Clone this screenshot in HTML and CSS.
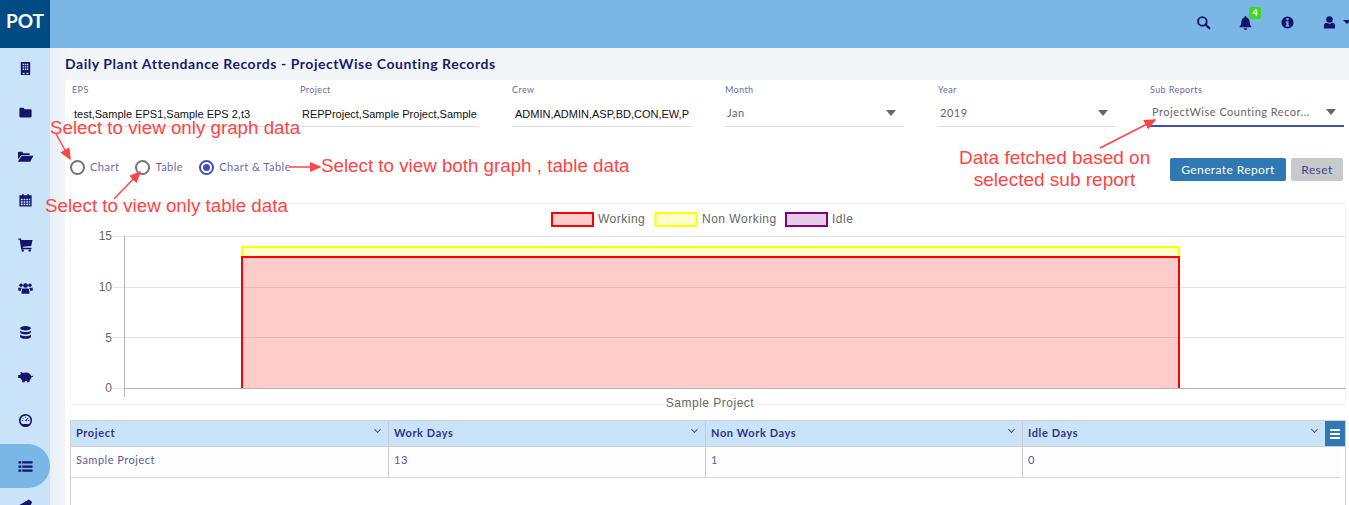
FILE: index.html
```html
<!DOCTYPE html>
<html lang="en">
<head>
  <meta charset="UTF-8" />
  <title>Daily Plant Attendance Records</title>
  <link rel="stylesheet" href="styles.css">
</head>
<body>
  <header class="topbar">
    <div class="logo">POT</div>
    <div class="top-icons">
      <svg class="top-icon" viewBox="0 0 16 16"><circle cx="6.8" cy="6.8" r="4.6" fill="none" stroke="currentColor" stroke-width="2"/><path d="M10.2 10.2l4 4" stroke="currentColor" stroke-width="2.4" stroke-linecap="round"/></svg>
      <span class="bell">
        <svg class="top-icon" viewBox="0 0 16 16"><path d="M8 1a1 1 0 0 1 1 1v.6c2.2.5 3.4 2.3 3.4 4.4 0 3 .8 4 1.8 5v1H1.800v-1c1-1 1.800-2 1.800-5 0-2.100 1.200-3.900 3.400-4.400V2a1 1 0 0 1 1-1zM6.200 14.200h3.600a1.800 1.800 0 0 1-3.600 0z" fill="currentColor"/></svg>
        <span class="badge">4</span>
      </span>
      <svg class="top-icon" viewBox="0 0 16 16"><path fill-rule="evenodd" d="M8 1.500a6.500 6.500 0 1 1 0 13 6.500 6.500 0 0 1 0-13zM6.800 3.500v2.200h2.400V3.500zM6 7v1.500h.9v2.300H6v1.500h4v-1.500h-.9V7z" fill="currentColor"/></svg>
      <span class="user">
        <svg class="top-icon" viewBox="0 0 16 16"><circle cx="8" cy="4.800" r="3.500" fill="currentColor"/><path d="M2 14.500v-3c0-2 1.500-3.300 3.200-3.300.8.600 1.800 1 2.800 1s2-.4 2.800-1c1.700 0 3.200 1.300 3.200 3.300v3z" fill="currentColor"/></svg>
        <span class="caret"></span>
      </span>
    </div>
  </header>

  <div class="layout">
    <aside class="sidebar">
      <svg class="side-icon" viewBox="0 0 16 16"><path fill-rule="evenodd" d="M3 1h10v14H3zM5 3v1.500h1.500V3zM7.300 3v1.500h1.500V3zM9.500 3v1.500H11V3zM5 5.500V7h1.500V5.500zM7.300 5.500V7h1.500V5.500zM9.500 5.500V7H11V5.500zM5 8v1.500h1.500V8zM7.300 8v1.500h1.500V8zM9.500 8v1.500H11V8zM5 12.500V14h2v-1.500zM9 12.500V14h2v-1.500z" fill="currentColor"/></svg>
      <svg class="side-icon" viewBox="0 0 16 16"><path d="M1.500 4.200c0-.6.500-1.200 1.200-1.200h3.100l1.400 1.500h6.100c.7 0 1.200.500 1.200 1.200v6.400c0 .7-.5 1.200-1.200 1.200H2.700c-.7 0-1.200-.5-1.200-1.200z" fill="currentColor"/></svg>
      <svg class="side-icon side-icon-wide" viewBox="0 0 18 16"><path d="M1 3.800C1 3.300 1.400 3 1.900 3h3.500l1.300 1.400h6c.5 0 .9.400.9.900V6.500H4.600L1 11z" fill="currentColor"/><path d="M4.800 7.300H17.500L14 13.500H.8z" fill="currentColor"/></svg>
      <svg class="side-icon" viewBox="0 0 16 16"><path fill-rule="evenodd" d="M1.500 2.500h3V1h1.500v1.500h4V1h1.500v1.500h3v12h-13zM3 6v1.700h2V6zM6 6v1.700h1.800V6zM8.800 6v1.700h1.800V6zM11.500 6v1.700h1.500V6zM3 8.700v1.700h2V8.700zM6 8.700v1.700h1.800V8.700zM8.800 8.700v1.700h1.800V8.700zM11.500 8.700v1.700h1.500V8.700zM3 11.300V13h2v-1.700zM6 11.300V13h1.800v-1.700zM8.800 11.300V13h1.800v-1.700zM11.500 11.300V13h1.500v-1.700z" fill="currentColor"/></svg>
      <svg class="side-icon" viewBox="0 0 16 16"><path d="M.5 1.500h2.600l.5 1.800H15.500l-1.400 6.200-9 .8.300 1.200h9v1.500H3.400L1.800 3H.5z" fill="currentColor"/><circle cx="5" cy="14.300" r="1.300" fill="currentColor"/><circle cx="12.500" cy="14.300" r="1.300" fill="currentColor"/></svg>
      <svg class="side-icon" viewBox="0 0 16 16"><circle cx="3.300" cy="4.500" r="1.900" fill="currentColor"/><circle cx="12.700" cy="4.500" r="1.900" fill="currentColor"/><circle cx="8" cy="4.800" r="2.500" fill="currentColor"/><path d="M.3 7.200h3.600c-.6 1-.7 2-.7 3.300H.3zM12.100 7.200h3.600v3.300h-2.900c0-1.300-.1-2.300-.7-3.300zM4.800 8h6.400c.8 1 1 2.800 1 5.500H3.800c0-2.700.2-4.500 1-5.500z" fill="currentColor"/></svg>
      <svg class="side-icon" viewBox="0 0 16 16"><ellipse cx="8" cy="3.500" rx="5.800" ry="2.400" fill="currentColor"/><path d="M2.200 5.800c1 1.200 3.300 1.700 5.800 1.700s4.800-.5 5.800-1.700v2c0 1.300-2.600 2.200-5.800 2.200s-5.800-.9-5.800-2.200zM2.200 10.200c1 1.200 3.300 1.700 5.800 1.700s4.800-.5 5.800-1.700v2.300c0 1.300-2.600 2.200-5.800 2.200s-5.800-.9-5.800-2.200z" fill="currentColor"/></svg>
      <svg class="side-icon side-icon-wide" viewBox="0 0 18 16"><path d="M3.500 3.200c1 0 2 .5 2.600 1 1-.4 2-.6 3.200-.6 3.400 0 5.600 2 5.900 4.200l1.600-.7.400 1-2 .9c-.2 1.200-.9 2.300-1.900 3.100V14h-2.800v-1.100c-.7.100-1.500.1-2.200 0V14H5.500v-2c-1-.6-1.700-1.400-2.100-2.300H1.200V6.300h1.900c.3-.5.700-1 1.100-1.300z" fill="currentColor"/></svg>
      <svg class="side-icon" viewBox="0 0 16 16"><path fill-rule="evenodd" d="M8 1a7 7 0 1 1 0 14A7 7 0 0 1 8 1zm0 1.800a5.200 5.200 0 0 0-5.200 5.200c0 1.500.6 2.800 1.600 3.800h7.200a5.200 5.200 0 0 0-3.600-9z" fill="currentColor"/><path d="M7.600 3.600h.8v1.500h-.8zM4 7.600h1.500v.8H4zM10.500 7.600H12v.8h-1.500zM5 5l1 1-.5.500-1-1zM10.800 4.800l.5.500L8.600 9l-1.200-.8z" fill="currentColor"/></svg>
      <div class="side-active">
        <svg class="side-icon side-icon-wide" viewBox="0 0 18 16"><path d="M1.500 2.500h3v2.400h-3zM5.500 2.500h11v2.400h-11zM1.500 6.800h3v2.400h-3zM5.500 6.800h11v2.400h-11zM1.500 11.100h3v2.400h-3zM5.500 11.100h11v2.400h-11z" fill="currentColor"/></svg>
      </div>
      <svg class="side-icon side-icon-last" viewBox="0 0 18 16"><path d="M1 9l12-7 4 3-3 6H4z" fill="currentColor"/></svg>
    </aside>

    <main class="content">
      <h1 class="page-title">Daily Plant Attendance Records - ProjectWise Counting Records</h1>
      <section class="panel">
        <div class="filters">
          <div class="field">
            <label>EPS</label>
            <div class="value value-plain">test,Sample EPS1,Sample EPS 2,t3</div>
          </div>
          <div class="field">
            <label>Project</label>
            <div class="value value-plain">REPProject,Sample Project,Sample</div>
          </div>
          <div class="field">
            <label>Crew</label>
            <div class="value value-plain value-crew">ADMIN,ADMIN,ASP,BD,CON,EW,P</div>
          </div>
          <div class="field">
            <label>Month</label>
            <div class="value value-select">Jan<span class="caret"></span></div>
          </div>
          <div class="field">
            <label>Year</label>
            <div class="value value-select">2019<span class="caret"></span></div>
          </div>
          <div class="field field-focus">
            <label>Sub Reports</label>
            <div class="value value-select">ProjectWise Counting Recor...<span class="caret"></span></div>
          </div>
        </div>

        <div class="controls">
          <div class="radios">
            <span class="radio"><i class="dot"></i>Chart</span>
            <span class="radio"><i class="dot"></i>Table</span>
            <span class="radio radio-on"><i class="dot"></i>Chart &amp; Table</span>
          </div>
          <div class="actions">
            <button class="btn btn-primary">Generate Report</button>
            <button class="btn btn-reset">Reset</button>
          </div>
        </div>

        <div class="chart-box">
          <svg class="chart" viewBox="0 0 1276 201">
            <path class="grid" d="M43 33.500H1276M43 84.500H1276M43 134.500H1276M43 185.500H54"/>
            <path class="axis" d="M54.500 33V194M54 185.500H1276"/>
            <g class="ticks">
              <text x="42" y="37">15</text>
              <text x="42" y="88">10</text>
              <text x="42" y="139">5</text>
              <text x="42" y="189">0</text>
            </g>
            <rect x="172" y="44" width="937" height="11" fill="#ffff00" fill-opacity="0.2"/>
            <path d="M172 55V44H1109V55" fill="none" stroke="#ffff00" stroke-width="2"/>
            <rect x="172" y="54" width="937" height="131" fill="#ff0000" fill-opacity="0.2"/>
            <path d="M172 185V54H1109V185" fill="none" stroke="#ff0000" stroke-width="2"/>
            <g class="legend">
              <rect x="482" y="10" width="41" height="13" fill="#ffcccc" stroke="#ff0000" stroke-width="2"/>
              <text x="528" y="20">Working</text>
              <rect x="585.500" y="10" width="41" height="13" fill="#ffffcc" stroke="#ffff00" stroke-width="2"/>
              <text x="632" y="20">Non Working</text>
              <rect x="716" y="10" width="41" height="13" fill="#e6cce6" stroke="#800080" stroke-width="2"/>
              <text x="762" y="20">Idle</text>
            </g>
            <text class="x-label" x="640" y="204">Sample Project</text>
          </svg>
        </div>

        <div class="table-wrap">
          <div class="t-row t-head">
            <div class="t-cell">Project<span class="chev"></span></div>
            <div class="t-cell">Work Days<span class="chev"></span></div>
            <div class="t-cell">Non Work Days<span class="chev"></span></div>
            <div class="t-cell">Idle Days<span class="chev"></span></div>
            <button class="t-menu"><i></i><i></i><i></i></button>
          </div>
          <div class="t-row t-body">
            <div class="t-cell">Sample Project</div>
            <div class="t-cell">13</div>
            <div class="t-cell">1</div>
            <div class="t-cell">0</div>
          </div>
        </div>
      </section>
    </main>
  </div>

  <!-- help callouts drawn over the screenshot -->
  <svg class="arrows" viewBox="0 0 1349 505">
    <defs>
      <marker id="head" markerWidth="8" markerHeight="8" refX="7" refY="3.500" orient="auto">
        <path d="M0 0L8 3.500L0 7z"/>
      </marker>
    </defs>
    <path d="M56 134L70 159" marker-end="url(#head)"/>
    <path d="M114 199L140 172" marker-end="url(#head)"/>
    <path d="M290 167H320" marker-end="url(#head)"/>
    <path d="M1100 148L1155 120" marker-end="url(#head)"/>
  </svg>
  <div class="note note-graph">Select to view only graph data</div>
  <div class="note note-table">Select to view only table data</div>
  <div class="note note-both">Select to view both graph , table data</div>
  <div class="note note-sub">Data fetched based on<br>selected sub report</div>
</body>
</html>
```

FILE: styles.css
```css
* {
  box-sizing: border-box;
}

html, body {
  height: 505px;
  overflow: hidden;
}

body {
  margin: 0;
  position: relative;
  font-family: Lato, 'Noto Sans', sans-serif;
  color: #1a1a6e;
  background: #fff;
}

.topbar {
  display: flex;
  justify-content: space-between;
  height: 48px;
  background: #7ab6e6;
}

.logo {
  width: 50px;
  background: #004b83;
  color: #fff;
  font-size: 19px;
  font-weight: 700;
  line-height: 42px;
  text-align: center;
}

.top-icons {
  display: flex;
  align-items: center;
  gap: 27px;
  padding-bottom: 4px;
  margin-right: -2px;
}

.top-icon {
  display: block;
  width: 15px;
  height: 15px;
  color: #14146b;
}

.bell {
  position: relative;
}

.badge {
  position: absolute;
  top: -8px;
  right: -8px;
  width: 12px;
  height: 12px;
  border-radius: 2px;
  background: #3ed829;
  color: #fff;
  font-size: 9px;
  font-weight: 700;
  line-height: 11px;
  text-align: center;
}

.user {
  display: flex;
  align-items: center;
  gap: 6px;
}

.user .caret {
  border-width: 4px 4px 0;
  border-top-color: #14146b;
}

.caret {
  display: block;
  width: 0;
  height: 0;
  border-style: solid;
  border-color: transparent;
  border-top-color: #666;
  border-width: 6px 5px 0;
}

.layout {
  display: flex;
  height: 457px;
}

.sidebar {
  flex: none;
  display: flex;
  flex-direction: column;
  align-items: center;
  width: 50px;
  padding-top: 13px;
  background: #c9e4f8;
  overflow: hidden;
}

.side-icon {
  flex: none;
  display: block;
  width: 15px;
  height: 15px;
  margin-bottom: 29px;
  color: #14146b;
}

.side-icon-wide {
  width: 17px;
}

.side-active {
  flex: none;
  display: flex;
  align-items: center;
  justify-content: center;
  width: 50px;
  height: 44px;
  margin-top: -13px;
  margin-bottom: 9px;
  background: #7ab6e6;
  border-radius: 0 22px 22px 0;
}

.side-active .side-icon {
  margin: 0;
}

.side-icon-last {
  margin: 0;
}

.content {
  flex: 1;
  min-width: 0;
  padding-left: 15px;
  background: linear-gradient(to right, #e9f0f5, #f2f6f9 20px);
}

.page-title {
  margin: 0;
  height: 32px;
  font-size: 14px;
  font-weight: 700;
  line-height: 32px;
  letter-spacing: 0.55px;
  color: #1a1a6e;
}

.panel {
  height: 425px;
  padding: 0 0 0 5px;
  background: #fff;
  border-radius: 3px 0 0 0;
}

.filters {
  display: grid;
  grid-template-columns: 194px 178px 179px 179px 178px 194px;
  column-gap: 34px;
  padding: 4px 0 0 2px;
}

.field label {
  display: block;
  height: 15px;
  font-size: 9px;
  line-height: 12px;
  letter-spacing: 0.4px;
  color: #6a6aa8;
}

.value {
  height: 28px;
  border-bottom: 1px solid #ddd;
  font-size: 11px;
  line-height: 26px;
  white-space: nowrap;
  overflow: hidden;
}

.value-plain {
  padding: 2px 0 0 2px;
  font-family: 'Liberation Sans', Arial, sans-serif;
  color: #111;
}

.value-crew {
  padding-left: 3px;
}

.value-select {
  display: flex;
  align-items: center;
  justify-content: space-between;
  padding: 0 8px 0 2px;
  letter-spacing: 0.5px;
  color: #666;
}

.field-focus .value {
  border-bottom: 2px solid #3f51b5;
}

.controls {
  display: flex;
  justify-content: space-between;
  height: 76px;
}

.radios {
  display: flex;
  gap: 16px;
  padding: 31px 0 0 0;
  height: 60px;
}

.radio {
  display: flex;
  align-items: center;
  gap: 5px;
  height: 16px;
  font-size: 11px;
  letter-spacing: 0.5px;
  color: #6a6aa8;
}

.dot {
  display: block;
  position: relative;
  width: 15px;
  height: 15px;
  margin-top: 2px;
  border: 2px solid #757575;
  border-radius: 50%;
}

.radio-on .dot {
  border-color: #3f51b5;
}

.radio-on .dot::after {
  content: "";
  position: absolute;
  inset: 2px;
  border-radius: 50%;
  background: #3f51b5;
}

.actions {
  display: flex;
  gap: 5px;
  padding: 31px 6px 0 0;
}

.btn {
  height: 23px;
  border: none;
  border-radius: 2px;
  font-family: inherit;
  font-size: 12px;
  letter-spacing: 0.4px;
}

.btn-primary {
  width: 116px;
  background: #2f78b3;
  color: #fff;
}

.btn-reset {
  width: 52px;
  background: #c6c9ce;
  color: #44447a;
}

.chart-box {
  width: 1276px;
  height: 202px;
  border: 1px solid #f3f3f3;
}

.chart {
  display: block;
  width: 1276px;
  height: 201px;
  margin: -1px 0 0 -1px;
  font-family: 'Liberation Sans', Arial, sans-serif;
  font-size: 12px;
  overflow: visible;
}

.grid {
  fill: none;
  stroke: #e4e4e4;
  stroke-width: 1;
}

.axis {
  fill: none;
  stroke: #b5b5b5;
  stroke-width: 1;
}

.ticks text {
  fill: #666;
  text-anchor: end;
}

.legend text {
  fill: #666;
  letter-spacing: 0.500px;
}

.x-label {
  fill: #666;
  text-anchor: middle;
  letter-spacing: 0.500px;
}

.table-wrap {
  width: 1276px;
  height: 100px;
  margin-top: 15px;
  border: 1px solid #d0d0d0;
  border-bottom: none;
}

.t-row {
  display: grid;
  grid-template-columns: 318px 317px 317px 1fr;
}

.t-head {
  position: relative;
  height: 26px;
  background: #c9e4f8;
  border-bottom: 1px solid #ccc;
  font-size: 11px;
  font-weight: 700;
  letter-spacing: 0.6px;
  color: #33338a;
}

.t-body {
  width: 1269px;
  height: 31px;
  background: #fdfdfd;
  border-bottom: 1px solid #d4d4d4;
  font-size: 11px;
  letter-spacing: 0.5px;
  color: #5a5a9e;
}

.t-cell {
  position: relative;
  padding-left: 5px;
  border-right: 1px solid #ccc;
  line-height: 24px;
}

.t-cell:nth-child(4) {
  border-right: none;
}

.t-body .t-cell {
  line-height: 26px;
}

.t-head .t-cell:nth-child(4) .chev {
  right: 28px;
}

.chev {
  position: absolute;
  top: 6px;
  right: 8px;
  width: 5px;
  height: 5px;
  border-right: 1px solid #557;
  border-bottom: 1px solid #557;
  transform: rotate(45deg);
}

.t-menu {
  position: absolute;
  top: 0;
  right: 0;
  display: flex;
  flex-direction: column;
  justify-content: center;
  gap: 2px;
  width: 20px;
  height: 25px;
  padding: 0 5px;
  border: none;
  background: #2f78b3;
}

.t-menu i {
  display: block;
  height: 2px;
  background: #fff;
}

.arrows {
  position: absolute;
  top: 0;
  left: 0;
  width: 1349px;
  height: 505px;
  pointer-events: none;
}

.arrows path {
  fill: none;
  stroke: #ff4444;
  stroke-width: 1.500;
}

.arrows marker path {
  stroke: none;
  fill: #ff4444;
}

.note {
  position: absolute;
  font-family: 'Liberation Sans', Arial, sans-serif;
  font-size: 18.750px;
  line-height: 22px;
  color: #ff4444;
  white-space: nowrap;
}

.note-graph {
  top: 117px;
  left: 50px;
}

.note-table {
  top: 195px;
  left: 45px;
}

.note-both {
  top: 155px;
  left: 321px;
}

.note-sub {
  top: 147px;
  left: 959px;
  font-size: 19px;
  text-align: center;
}
```
